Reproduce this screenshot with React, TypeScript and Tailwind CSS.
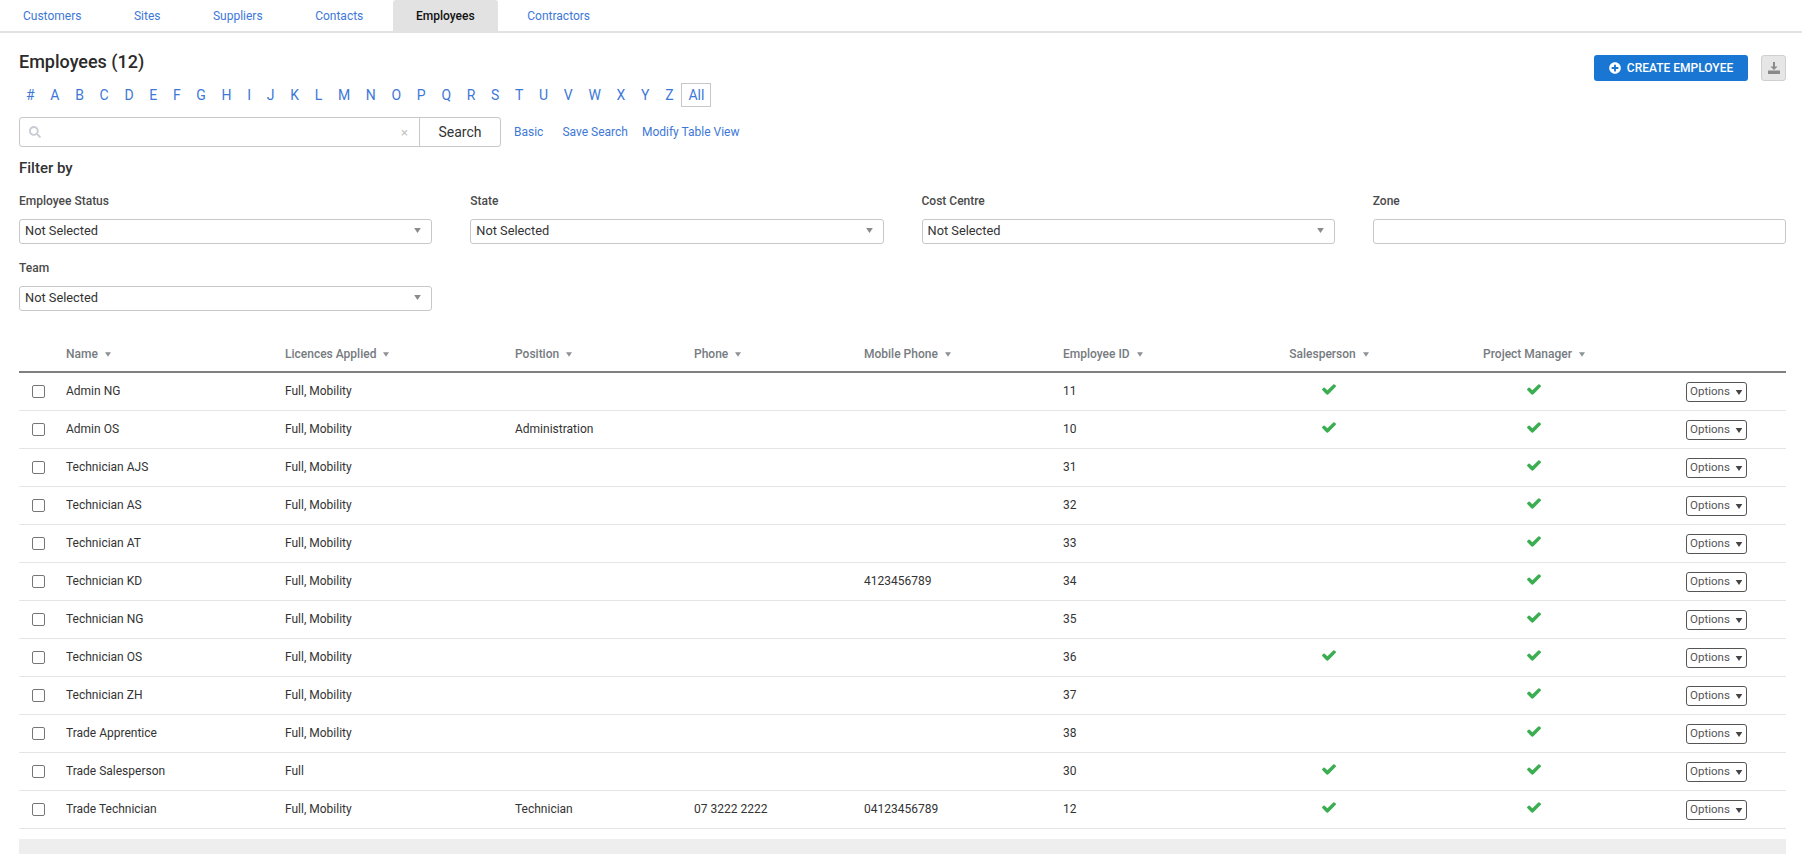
import { FaPlusCircle, FaSearch } from "react-icons/fa";

const tabs = ["Customers", "Sites", "Suppliers", "Contacts"];

const letters = "#ABCDEFGHIJKLMNOPQRSTUVWXYZ".split("");

const employees = [
  { name: "Admin NG", licences: "Full, Mobility", position: "", phone: "", mobile: "", id: "11", sales: true, pm: true },
  { name: "Admin OS", licences: "Full, Mobility", position: "Administration", phone: "", mobile: "", id: "10", sales: true, pm: true },
  { name: "Technician AJS", licences: "Full, Mobility", position: "", phone: "", mobile: "", id: "31", sales: false, pm: true },
  { name: "Technician AS", licences: "Full, Mobility", position: "", phone: "", mobile: "", id: "32", sales: false, pm: true },
  { name: "Technician AT", licences: "Full, Mobility", position: "", phone: "", mobile: "", id: "33", sales: false, pm: true },
  { name: "Technician KD", licences: "Full, Mobility", position: "", phone: "", mobile: "4123456789", id: "34", sales: false, pm: true },
  { name: "Technician NG", licences: "Full, Mobility", position: "", phone: "", mobile: "", id: "35", sales: false, pm: true },
  { name: "Technician OS", licences: "Full, Mobility", position: "", phone: "", mobile: "", id: "36", sales: true, pm: true },
  { name: "Technician ZH", licences: "Full, Mobility", position: "", phone: "", mobile: "", id: "37", sales: false, pm: true },
  { name: "Trade Apprentice", licences: "Full, Mobility", position: "", phone: "", mobile: "", id: "38", sales: false, pm: true },
  { name: "Trade Salesperson", licences: "Full", position: "", phone: "", mobile: "", id: "30", sales: true, pm: true },
  { name: "Trade Technician", licences: "Full, Mobility", position: "Technician", phone: "07 3222 2222", mobile: "04123456789", id: "12", sales: true, pm: true },
];

const cell = "border-b border-[#e5e5e5] p-0 pb-[1px]";

function Caret({ className }: { className: string }) {
  return (
    <svg viewBox="0 0 8 6" className={className} aria-hidden="true">
      <path d="M0 0h8L4 6z" fill="currentColor" />
    </svg>
  );
}

function Check() {
  return (
    <svg viewBox="121 334 1550 1188" className="mx-auto mb-[5px] h-[11px] w-[14px] text-[#3bae52]" aria-hidden="true">
      <path
        d="M1671 566q0 40-28 68l-724 724-136 136q-28 28-68 28t-68-28l-136-136-362-362q-28-28-28-68t28-68l136-136q28-28 68-28t68 28l294 295 656-657q28-28 68-28t68 28l136 136q28 28 28 68z"
        fill="currentColor"
      />
    </svg>
  );
}

function SelectBox({ label }: { label: string }) {
  return (
    <div>
      <div className="h-4 text-xs font-medium leading-4 text-[#4a4a4a]">{label}</div>
      <div className="mt-[10px] flex h-[25px] items-center justify-between rounded-[3px] border border-[#c8c8c8] bg-white pb-px pl-[5px] pr-[10px] text-[12.8px] text-[#333]">
        <span>Not Selected</span>
        <Caret className="mb-[2px] h-[5px] w-[7px] text-[#8a8a8a]" />
      </div>
    </div>
  );
}

function Head({ label, center }: { label: string; center?: boolean }) {
  return (
    <th className={`border-b-2 border-[#808080] p-0 text-xs font-medium text-[#767b80] ${center ? "text-center" : "text-left"}`}>
      <span className="inline-flex items-center gap-[7px]">
        {label}
        <Caret className="mt-[1px] h-[5px] w-[6px] text-[#8d9296]" />
      </span>
    </th>
  );
}

export default function App() {
  return (
    <div className="h-screen overflow-hidden bg-white font-['Roboto',sans-serif] text-xs text-[#333]">
      <div className="flex h-[33px] gap-[6.5px] border-b-2 border-[#e2e2e2]">
        {tabs.map((t) => (
          <a key={t} className="flex items-center px-[23px] text-xs text-[#3d78d8]">
            {t}
          </a>
        ))}
        <a className="flex h-[31px] w-[105px] items-center justify-center rounded-t-[3px] bg-[#e2e2e2] font-medium text-[#111]">
          Employees
        </a>
        <a className="flex items-center px-[23px] text-xs text-[#3d78d8]">Contractors</a>
      </div>

      <div className="pl-[19px] pr-[16px]">
        <div className="flex items-start justify-between">
          <div>
            <h1 className="mt-[17px] h-6 text-lg font-medium leading-6 text-[#2b2b2b]">Employees (12)</h1>
            <div className="mt-[9px] flex h-6 items-center text-sm text-[#3d78d8]">
              {letters.map((l) => (
                <a key={l} className="px-[7.85px] leading-6 first:pl-[7px]">{l}</a>
              ))}
              <a className="border border-[#c8c8c8] px-[6px] leading-[22px]">All</a>
            </div>
            <div className="mt-[10px] flex items-center">
              <div className="flex h-[30px] w-[482px] rounded-[3px] border border-[#c8c8c8]">
                <div className="flex w-[400px] items-center justify-between border-r border-[#c8c8c8] pl-[9px] pr-[11px]">
                  <FaSearch className="h-3 w-3 text-[#c9cdd3]" />
                  <span className="text-[13px] leading-none text-[#c4c4c4]">×</span>
                </div>
                <div className="flex flex-1 items-center justify-center text-sm text-[#333]">Search</div>
              </div>
              <a className="ml-[13px] text-xs text-[#3d78d8]">Basic</a>
              <a className="ml-[19px] text-xs text-[#3d78d8]">Save Search</a>
              <a className="ml-[14px] text-xs text-[#3d78d8]">Modify Table View</a>
            </div>
          </div>
          <div className="mt-[22px] flex gap-[13px]">
            <button className="flex h-[26px] w-[154px] items-center justify-center gap-[6px] rounded-[3px] bg-[#1976d2] text-xs font-medium text-white">
              <FaPlusCircle className="h-3 w-3" />
              CREATE EMPLOYEE
            </button>
            <button className="flex h-[26px] w-[25px] items-center justify-center rounded-[3px] border border-[#cfcfcf] bg-[#e6e6e6]">
              <svg viewBox="0 0 14 14" className="h-[14px] w-[14px] text-[#8a8a8a]" aria-hidden="true">
                <path d="M6 1h2v4.500h2.500L7 9 3.500 5.500H6z M1 9.500h12V13H1z" fill="currentColor" />
              </svg>
            </button>
          </div>
        </div>

        <div className="mt-[11px] h-5 text-[15px] font-medium leading-5 text-[#333]">Filter by</div>

        <div className="mt-[15px] grid grid-cols-4 gap-x-[38px] gap-y-[16px]">
          <SelectBox label="Employee Status" />
          <SelectBox label="State" />
          <SelectBox label="Cost Centre" />
          <div>
            <div className="h-4 text-xs font-medium leading-4 text-[#4a4a4a]">Zone</div>
            <input className="mt-[10px] h-[25px] w-full rounded-[3px] border border-[#c8c8c8] bg-white" />
          </div>
          <SelectBox label="Team" />
        </div>

        <table className="mt-[26px] w-full table-fixed border-separate border-spacing-0">
          <colgroup>
            <col className="w-[47px]" />
            <col className="w-[219px]" />
            <col className="w-[230px]" />
            <col className="w-[179px]" />
            <col className="w-[170px]" />
            <col className="w-[199px]" />
            <col className="w-[174px]" />
            <col className="w-[184px]" />
            <col className="w-[226px]" />
            <col />
          </colgroup>
          <thead>
            <tr className="h-[36px]">
              <th className="border-b-2 border-[#808080] p-0" />
              <Head label="Name" />
              <Head label="Licences Applied" />
              <Head label="Position" />
              <Head label="Phone" />
              <Head label="Mobile Phone" />
              <Head label="Employee ID" />
              <Head label="Salesperson" center />
              <Head label="Project Manager" center />
              <th className="border-b-2 border-[#808080] p-0" />
            </tr>
          </thead>
          <tbody>
            {employees.map((e) => (
              <tr key={e.name} className="h-[38px]">
                <td className="border-b border-[#e5e5e5] p-0 pl-[13px]">
                  <input type="checkbox" className="block h-[13px] w-[13px] appearance-none rounded-[2px] border border-[#767676] bg-white" />
                </td>
                <td className={cell}>{e.name}</td>
                <td className={cell}>{e.licences}</td>
                <td className={cell}>{e.position}</td>
                <td className={cell}>{e.phone}</td>
                <td className={cell}>{e.mobile}</td>
                <td className={cell}>{e.id}</td>
                <td className="border-b border-[#e5e5e5] p-0">{e.sales && <Check />}</td>
                <td className="border-b border-[#e5e5e5] p-0">{e.pm && <Check />}</td>
                <td className="border-b border-[#e5e5e5] p-0">
                  <button className="mx-auto flex h-5 w-[61px] items-center justify-center gap-[5px] rounded-[3px] border border-[#555] pt-px text-[11.5px] leading-none text-[#555]">
                    Options
                    <Caret className="h-[5px] w-[8px] text-[#444]" />
                  </button>
                </td>
              </tr>
            ))}
          </tbody>
        </table>

        <div className="mt-[10px] h-[15px] bg-[#eeeeee]" />
      </div>
    </div>
  );
}
